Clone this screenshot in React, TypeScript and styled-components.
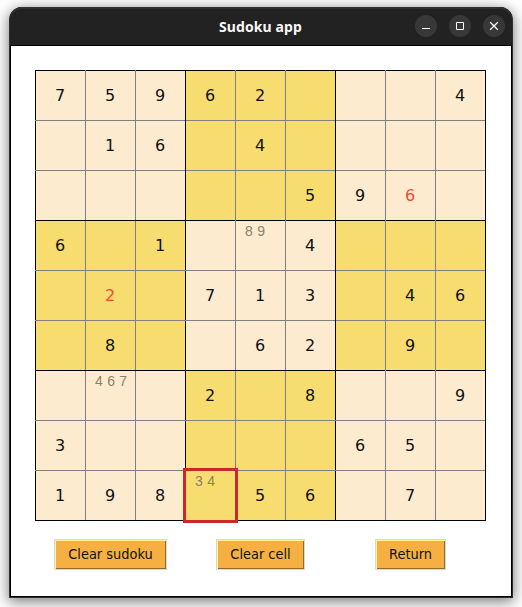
import React from 'react';
import styled, { createGlobalStyle } from 'styled-components';

const GlobalStyle = createGlobalStyle`
  html, body, #root { height: 100%; }
  body { margin: 0; background: #fff; overflow: hidden; }
`;

const Desktop = styled.div`
  box-sizing: border-box;
  height: 100%;
  padding: 7px 9px 9px;
  overflow: hidden;
`;

const Window = styled.div`
  box-sizing: border-box;
  width: 504px;
  height: 591px;
  display: flex;
  flex-direction: column;
  border: 1px solid #2f2f2f;
  border-top: 0;
  border-radius: 13px 13px 0 0;
  background: #000;
  box-shadow: 0 3px 14px 1px rgba(0, 0, 0, 0.5);
`;

const TitleBar = styled.header`
  box-sizing: border-box;
  height: 38px;
  flex: none;
  display: grid;
  grid-template-columns: 1fr auto 1fr;
  align-items: center;
  background: #222;
  border-radius: 12px 12px 0 0;
  box-shadow: inset 0 2px 0 #313131;
`;

const Title = styled.h1`
  grid-column: 2;
  margin: 1px 1px 0 0;
  font: bold 14px/20px 'Noto Sans', sans-serif;
  letter-spacing: 0.1px;
  color: #f7f7f7;
`;

const Controls = styled.div`
  display: flex;
  gap: 12px;
  justify-content: flex-end;
  padding-right: 7px;
`;

const Control = styled.button`
  width: 22px;
  height: 22px;
  padding: 0;
  border: 0;
  border-radius: 50%;
  background: #383838;
  svg { display: block; }
`;

const Content = styled.main`
  box-sizing: border-box;
  height: 550px;
  margin: 1px 1px 1px;
  padding: 24px 24px 0;
  background: #fff;
`;

const Board = styled.div`
  display: grid;
  grid-template: repeat(9, 50px) 1px / repeat(9, 50px) 1px;
  width: 451px;
`;

const Cell = styled.div<{ $fill: string; $left: string; $top: string; $corner: string }>`
  position: relative;
  display: flex;
  align-items: center;
  justify-content: center;
  background:
    linear-gradient(${p => p.$corner}, ${p => p.$corner}) 0 0 / 1px 1px no-repeat,
    linear-gradient(${p => p.$top}, ${p => p.$top}) 0 0 / 100% 1px no-repeat,
    linear-gradient(${p => p.$left}, ${p => p.$left}) 0 0 / 1px 100% no-repeat,
    ${p => p.$fill};
`;

const Digit = styled.span<{ $wrong: boolean }>`
  padding-top: 2px;
  font: 16px/20px 'DejaVu Sans', sans-serif;
  color: ${p => (p.$wrong ? '#f04a3a' : '#111')};
`;

const Notes = styled.span`
  align-self: flex-start;
  width: 100%;
  box-sizing: border-box;
  padding: 4px 0 0 10px;
  font: 14px/15px 'Liberation Sans', sans-serif;
  word-spacing: 0.5px;
  white-space: nowrap;
  color: #8c8068;
`;

const Selection = styled.div`
  position: absolute;
  z-index: 1;
  inset: -2px -3px -3px -2px;
  border: 3px solid #cc2828;
`;

const Actions = styled.div`
  display: flex;
  padding: 18px 0 0 19px;
`;

const Action = styled.button<{ $width: number; $gap: number }>`
  box-sizing: border-box;
  width: ${p => p.$width}px;
  height: 31px;
  margin: 0 ${p => p.$gap}px 0 0;
  padding: 0;
  border: 1px solid #d9d9d9;
  background: #f6b042;
  box-shadow: inset 1px 1px 0 #fff48f, inset -1px -1px 0 #946a28;
  font: 14.4px/27px 'DejaVu Sans Condensed', 'DejaVu Sans', sans-serif;
  font-stretch: semi-condensed;
  color: #111;
  white-space: nowrap;
`;

const BLACK = '#000';
const GRAY = '#808080';
const CREAM = '#fdebd0';
const YELLOW = '#f7dc6f';

const puzzle = [
  '75962...4',
  '.16.4....',
  '.....596.',
  '6.1..4...',
  '.2.713.46',
  '.8..62.9.',
  '...2.8..9',
  '3.....65.',
  '198.56.7.',
];
const wrong = new Set(['2,7', '4,1']);
const notes: Record<string, string> = { '3,4': '8 9', '6,1': '4 6 7', '8,3': '3 4' };
const selected = '8,3';

const lineColor = (n: number) => (n % 3 === 0 ? BLACK : GRAY);
const steps = Array.from({ length: 10 }, (_, i) => i);

function fillColor(row: number, col: number) {
  if (row === 9 || col === 9) return 'transparent';
  return (Math.floor(row / 3) + Math.floor(col / 3)) % 2 ? YELLOW : CREAM;
}

function SudokuBoard() {
  return (
    <Board>
      {steps.flatMap(row =>
        steps.map(col => {
          const key = `${row},${col}`;
          const value = puzzle[row]?.[col];
          return (
            <Cell
              key={key}
              $fill={fillColor(row, col)}
              $left={row === 9 ? 'transparent' : lineColor(col)}
              $top={col === 9 ? 'transparent' : lineColor(row)}
              $corner={lineColor(col > row ? col : row)}
            >
              {value && value !== '.' && <Digit $wrong={wrong.has(key)}>{value}</Digit>}
              {notes[key] && <Notes>{notes[key]}</Notes>}
              {key === selected && <Selection />}
            </Cell>
          );
        }),
      )}
    </Board>
  );
}

export default function App() {
  return (
    <>
      <GlobalStyle />
      <Desktop>
        <Window>
          <TitleBar>
            <Title>Sudoku app</Title>
            <Controls>
              <Control aria-label="Minimize">
                <svg width="22" height="22"><path d="M7 13.5h8" stroke="#fff" /></svg>
              </Control>
              <Control aria-label="Maximize">
                <svg width="22" height="22"><path d="M7.5 7.5h7v7h-7z" stroke="#fff" fill="none" /></svg>
              </Control>
              <Control aria-label="Close">
                <svg width="22" height="22"><path d="M7.2 7.2l7.6 7.6M14.8 7.2l-7.6 7.6" stroke="#fff" strokeWidth="1.3" /></svg>
              </Control>
            </Controls>
          </TitleBar>
          <Content>
            <SudokuBoard />
            <Actions>
              <Action $width={113} $gap={49}>Clear sudoku</Action>
              <Action $width={89} $gap={70}>Clear cell</Action>
              <Action $width={71} $gap={0}>Return</Action>
            </Actions>
          </Content>
        </Window>
      </Desktop>
    </>
  );
}
